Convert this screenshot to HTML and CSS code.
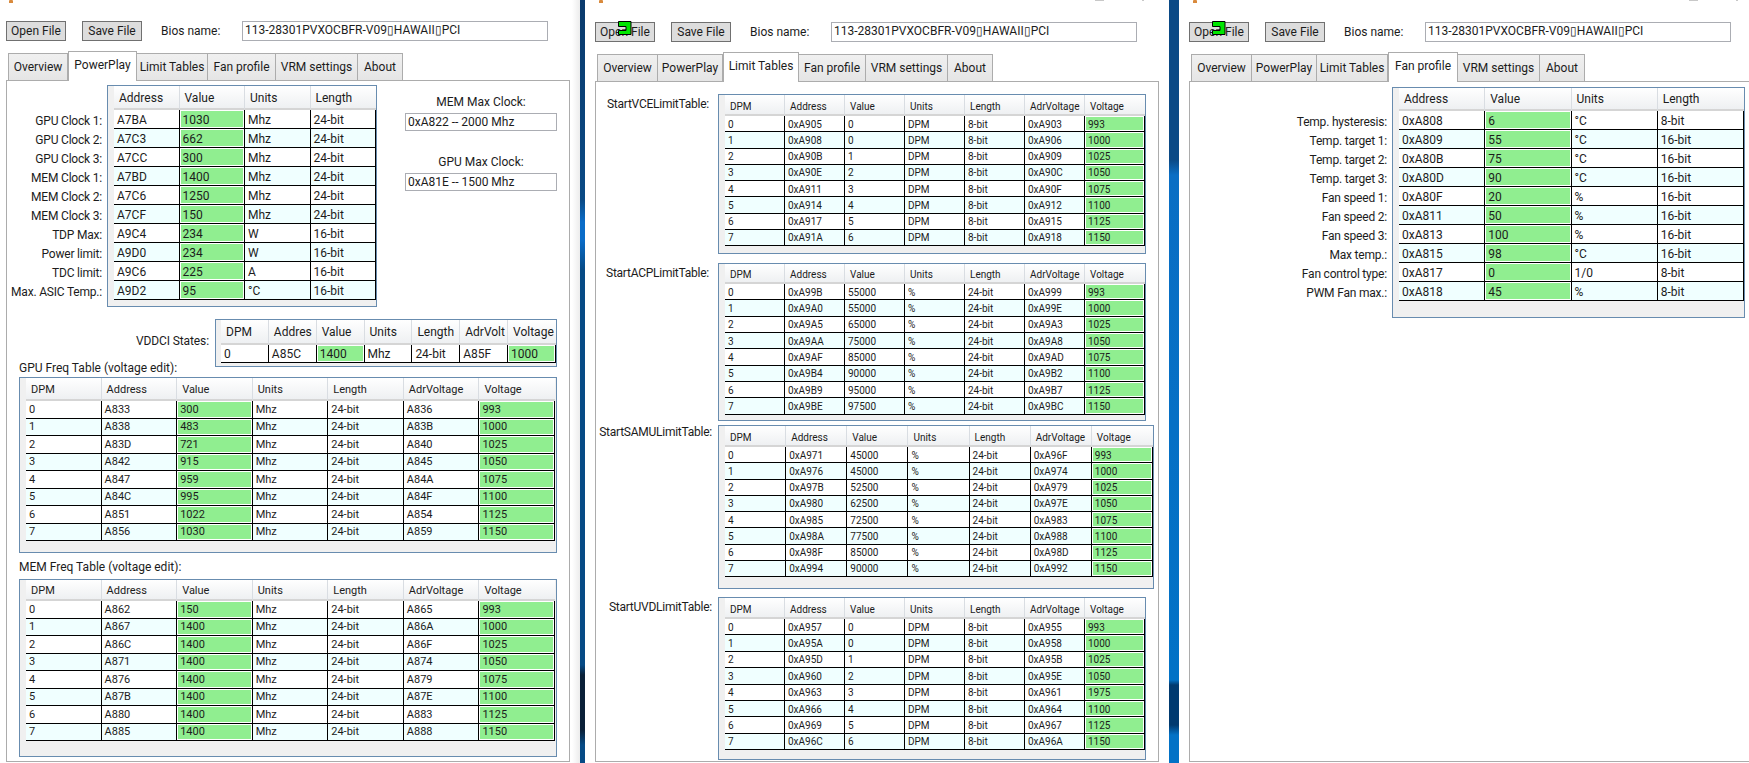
FILE: index.html
```html
<!DOCTYPE html>
<html lang="en">
<head>
<meta charset="utf-8">
<title>Hawaii Bios Reader and Modifier</title>
<link rel="stylesheet" href="styles.css">
</head>
<body>
<div class="desktop">

<section class="win win1">
<div class="title"><i class="ico"></i></div>
<div class="bar"><button class="btn">Open File</button><button class="btn save">Save File</button><span class="bios">Bios name:</span><div class="field name">113-28301PVXOCBFR-V09▯HAWAII▯PCI</div></div>
<div class="tabs"><div class="tab ov">Overview</div><div class="tab pp sel">PowerPlay</div><div class="tab lt">Limit Tables</div><div class="tab fp">Fan profile</div><div class="tab vr">VRM settings</div><div class="tab ab">About</div></div>
<div class="panel p1">
<div class="top">
<div class="labels l1"><div>GPU Clock 1:</div><div>GPU Clock 2:</div><div>GPU Clock 3:</div><div>MEM Clock 1:</div><div>MEM Clock 2:</div><div>MEM Clock 3:</div><div>TDP Max:</div><div>Power limit:</div><div>TDC limit:</div><div>Max. ASIC Temp.:</div></div>
<div class="grid g-main">
<table><thead><tr><th>Address<th>Value<th>Units<th>Length</thead><tbody>
<tr><td>A7BA<td class="v">1030<td>Mhz<td>24-bit
<tr><td>A7C3<td class="v">662<td>Mhz<td>24-bit
<tr><td>A7CC<td class="v">300<td>Mhz<td>24-bit
<tr><td>A7BD<td class="v">1400<td>Mhz<td>24-bit
<tr><td>A7C6<td class="v">1250<td>Mhz<td>24-bit
<tr><td>A7CF<td class="v">150<td>Mhz<td>24-bit
<tr><td>A9C4<td class="v">234<td>W<td>16-bit
<tr><td>A9D0<td class="v">234<td>W<td>16-bit
<tr><td>A9C6<td class="v">225<td>A<td>16-bit
<tr><td>A9D2<td class="v">95<td>°C<td>16-bit
</tbody></table>
</div>
<div class="maxes">
<div class="maxlabel">MEM Max Clock:</div><div class="field maxval">0xA822 -- 2000 Mhz</div>
<div class="maxlabel second">GPU Max Clock:</div><div class="field maxval">0xA81E -- 1500 Mhz</div>
</div>
</div>
<div class="vddci">
<div class="vlabel">VDDCI States:</div>
<div class="grid g-vddci">
<table><thead><tr><th>DPM<th>Addres<th>Value<th>Units<th>Length<th>AdrVolt<th>Voltage</thead><tbody>
<tr><td>0<td>A85C<td class="v">1400<td>Mhz<td>24-bit<td>A85F<td class="v">1000
</tbody></table>
</div>
</div>
<div class="caption cap-gpu">GPU Freq Table (voltage edit):</div>
<div class="grid g-gpu">
<table><thead><tr><th>DPM<th>Address<th>Value<th>Units<th>Length<th>AdrVoltage<th>Voltage</thead><tbody>
<tr><td>0<td>A833<td class="v">300<td>Mhz<td>24-bit<td>A836<td class="v">993
<tr><td>1<td>A838<td class="v">483<td>Mhz<td>24-bit<td>A83B<td class="v">1000
<tr><td>2<td>A83D<td class="v">721<td>Mhz<td>24-bit<td>A840<td class="v">1025
<tr><td>3<td>A842<td class="v">915<td>Mhz<td>24-bit<td>A845<td class="v">1050
<tr><td>4<td>A847<td class="v">959<td>Mhz<td>24-bit<td>A84A<td class="v">1075
<tr><td>5<td>A84C<td class="v">995<td>Mhz<td>24-bit<td>A84F<td class="v">1100
<tr><td>6<td>A851<td class="v">1022<td>Mhz<td>24-bit<td>A854<td class="v">1125
<tr><td>7<td>A856<td class="v">1030<td>Mhz<td>24-bit<td>A859<td class="v">1150
</tbody></table>
</div>
<div class="caption cap-mem">MEM Freq Table (voltage edit):</div>
<div class="grid g-mem">
<table><thead><tr><th>DPM<th>Address<th>Value<th>Units<th>Length<th>AdrVoltage<th>Voltage</thead><tbody>
<tr><td>0<td>A862<td class="v">150<td>Mhz<td>24-bit<td>A865<td class="v">993
<tr><td>1<td>A867<td class="v">1400<td>Mhz<td>24-bit<td>A86A<td class="v">1000
<tr><td>2<td>A86C<td class="v">1400<td>Mhz<td>24-bit<td>A86F<td class="v">1025
<tr><td>3<td>A871<td class="v">1400<td>Mhz<td>24-bit<td>A874<td class="v">1050
<tr><td>4<td>A876<td class="v">1400<td>Mhz<td>24-bit<td>A879<td class="v">1075
<tr><td>5<td>A87B<td class="v">1400<td>Mhz<td>24-bit<td>A87E<td class="v">1100
<tr><td>6<td>A880<td class="v">1400<td>Mhz<td>24-bit<td>A883<td class="v">1125
<tr><td>7<td>A885<td class="v">1400<td>Mhz<td>24-bit<td>A888<td class="v">1150
</tbody></table>
</div>
</div>
</section>

<section class="win win2">
<div class="title"><i class="ico"></i><span class="tt">Hawaii Bios Reader and Modifier</span><i class="ctl c1"></i><i class="ctl c2"></i></div>
<div class="bar"><button class="btn">Open File<svg class="cursor" viewBox="0 0 14 14"><path d="M.5.5H13V13.5H.5V9.5H8V5.5H.5Z"/></svg></button><button class="btn save">Save File</button><span class="bios">Bios name:</span><div class="field name">113-28301PVXOCBFR-V09▯HAWAII▯PCI</div></div>
<div class="tabs"><div class="tab ov">Overview</div><div class="tab pp">PowerPlay</div><div class="tab lt sel">Limit Tables</div><div class="tab fp">Fan profile</div><div class="tab vr">VRM settings</div><div class="tab ab">About</div></div>
<div class="panel p2">
<div class="lrow">
<div class="tname">StartVCELimitTable:</div>
<div class="grid g-lim g-vce">
<table><thead><tr><th>DPM<th>Address<th>Value<th>Units<th>Length<th>AdrVoltage<th>Voltage</thead><tbody>
<tr><td>0<td>0xA905<td>0<td>DPM<td>8-bit<td>0xA903<td class="v">993
<tr><td>1<td>0xA908<td>0<td>DPM<td>8-bit<td>0xA906<td class="v">1000
<tr><td>2<td>0xA90B<td>1<td>DPM<td>8-bit<td>0xA909<td class="v">1025
<tr><td>3<td>0xA90E<td>2<td>DPM<td>8-bit<td>0xA90C<td class="v">1050
<tr><td>4<td>0xA911<td>3<td>DPM<td>8-bit<td>0xA90F<td class="v">1075
<tr><td>5<td>0xA914<td>4<td>DPM<td>8-bit<td>0xA912<td class="v">1100
<tr><td>6<td>0xA917<td>5<td>DPM<td>8-bit<td>0xA915<td class="v">1125
<tr><td>7<td>0xA91A<td>6<td>DPM<td>8-bit<td>0xA918<td class="v">1150
</tbody></table>
</div>
</div>
<div class="lrow acp">
<div class="tname">StartACPLimitTable:</div>
<div class="grid g-lim g-acp">
<table><thead><tr><th>DPM<th>Address<th>Value<th>Units<th>Length<th>AdrVoltage<th>Voltage</thead><tbody>
<tr><td>0<td>0xA99B<td>55000<td>%<td>24-bit<td>0xA999<td class="v">993
<tr><td>1<td>0xA9A0<td>55000<td>%<td>24-bit<td>0xA99E<td class="v">1000
<tr><td>2<td>0xA9A5<td>65000<td>%<td>24-bit<td>0xA9A3<td class="v">1025
<tr><td>3<td>0xA9AA<td>75000<td>%<td>24-bit<td>0xA9A8<td class="v">1050
<tr><td>4<td>0xA9AF<td>85000<td>%<td>24-bit<td>0xA9AD<td class="v">1075
<tr><td>5<td>0xA9B4<td>90000<td>%<td>24-bit<td>0xA9B2<td class="v">1100
<tr><td>6<td>0xA9B9<td>95000<td>%<td>24-bit<td>0xA9B7<td class="v">1125
<tr><td>7<td>0xA9BE<td>97500<td>%<td>24-bit<td>0xA9BC<td class="v">1150
</tbody></table>
</div>
</div>
<div class="lrow samu">
<div class="tname wide">StartSAMULimitTable:</div>
<div class="grid g-lim g-samu">
<table><thead><tr><th>DPM<th>Address<th>Value<th>Units<th>Length<th>AdrVoltage<th>Voltage</thead><tbody>
<tr><td>0<td>0xA971<td>45000<td>%<td>24-bit<td>0xA96F<td class="v">993
<tr><td>1<td>0xA976<td>45000<td>%<td>24-bit<td>0xA974<td class="v">1000
<tr><td>2<td>0xA97B<td>52500<td>%<td>24-bit<td>0xA979<td class="v">1025
<tr><td>3<td>0xA980<td>62500<td>%<td>24-bit<td>0xA97E<td class="v">1050
<tr><td>4<td>0xA985<td>72500<td>%<td>24-bit<td>0xA983<td class="v">1075
<tr><td>5<td>0xA98A<td>77500<td>%<td>24-bit<td>0xA988<td class="v">1100
<tr><td>6<td>0xA98F<td>85000<td>%<td>24-bit<td>0xA98D<td class="v">1125
<tr><td>7<td>0xA994<td>90000<td>%<td>24-bit<td>0xA992<td class="v">1150
</tbody></table>
</div>
</div>
<div class="lrow uvd">
<div class="tname wider">StartUVDLimitTable:</div>
<div class="grid g-lim g-uvd">
<table><thead><tr><th>DPM<th>Address<th>Value<th>Units<th>Length<th>AdrVoltage<th>Voltage</thead><tbody>
<tr><td>0<td>0xA957<td>0<td>DPM<td>8-bit<td>0xA955<td class="v">993
<tr><td>1<td>0xA95A<td>0<td>DPM<td>8-bit<td>0xA958<td class="v">1000
<tr><td>2<td>0xA95D<td>1<td>DPM<td>8-bit<td>0xA95B<td class="v">1025
<tr><td>3<td>0xA960<td>2<td>DPM<td>8-bit<td>0xA95E<td class="v">1050
<tr><td>4<td>0xA963<td>3<td>DPM<td>8-bit<td>0xA961<td class="v">1975
<tr><td>5<td>0xA966<td>4<td>DPM<td>8-bit<td>0xA964<td class="v">1100
<tr><td>6<td>0xA969<td>5<td>DPM<td>8-bit<td>0xA967<td class="v">1125
<tr><td>7<td>0xA96C<td>6<td>DPM<td>8-bit<td>0xA96A<td class="v">1150
</tbody></table>
</div>
</div>
</div>
</section>

<section class="win win3">
<div class="title"><i class="ico"></i><span class="tt">Hawaii Bios Reader and Modifier</span><i class="ctl c1"></i><i class="ctl c2"></i></div>
<div class="bar"><button class="btn">Open File<svg class="cursor" viewBox="0 0 14 14"><path d="M.5.5H13V13.5H.5V9.5H8V5.5H.5Z"/></svg></button><button class="btn save">Save File</button><span class="bios">Bios name:</span><div class="field name">113-28301PVXOCBFR-V09▯HAWAII▯PCI</div></div>
<div class="tabs"><div class="tab ov">Overview</div><div class="tab pp">PowerPlay</div><div class="tab lt">Limit Tables</div><div class="tab fp sel">Fan profile</div><div class="tab vr">VRM settings</div><div class="tab ab">About</div></div>
<div class="panel p3">
<div class="labels l3"><div>Temp. hysteresis:</div><div>Temp. target 1:</div><div>Temp. target 2:</div><div>Temp. target 3:</div><div>Fan speed 1:</div><div>Fan speed 2:</div><div>Fan speed 3:</div><div>Max temp.:</div><div>Fan control type:</div><div>PWM Fan max.:</div></div>
<div class="grid g-fan">
<table><thead><tr><th>Address<th>Value<th>Units<th>Length</thead><tbody>
<tr><td>0xA808<td class="v">6<td>°C<td>8-bit
<tr><td>0xA809<td class="v">55<td>°C<td>16-bit
<tr><td>0xA80B<td class="v">75<td>°C<td>16-bit
<tr><td>0xA80D<td class="v">90<td>°C<td>16-bit
<tr><td>0xA80F<td class="v">20<td>%<td>16-bit
<tr><td>0xA811<td class="v">50<td>%<td>16-bit
<tr><td>0xA813<td class="v">100<td>%<td>16-bit
<tr><td>0xA815<td class="v">98<td>°C<td>16-bit
<tr><td>0xA817<td class="v">0<td>1/0<td>8-bit
<tr><td>0xA818<td class="v">45<td>%<td>8-bit
</tbody></table>
</div>
</div>
</section>

</div>
</body>
</html>
```
FILE: styles.css
```css
* { box-sizing: border-box; }
html, body { margin: 0; padding: 0; background: #fff; }
body { font-family: Roboto, "Noto Sans", sans-serif; font-size: 12px; color: #1c1c1c; }

.desktop {
  position: relative;
  width: 1749px;
  height: 763px;
  overflow: hidden;
  background:
    linear-gradient(#0a3a6c 0, #0a4a85 200px, #0a6cc8 222px, #0a6cc8 240px, #064a85 270px, #064a85 665px, #0a2038 675px, #0a2038 730px, #064a85 745px) 580px 0 / 5px 100% no-repeat,
    linear-gradient(#0b4a86 0, #0b4a86 160px, #0a6ec4 175px, #0272c6 680px, #003a70 685px, #003a70 725px, #0272c6 735px) 1169px 0 / 10px 100% no-repeat,
    #fff;
}

.win { position: absolute; top: 0; height: 763px; background: #fff; display: flex; flex-direction: column; overflow: hidden; padding: 22px 0 1px 10px; }
.win1 { left: 0; width: 580px; padding: 21px 0 1px 6px; background: linear-gradient(90deg, #fff 572px, #ececec 580px); }
.win2 { left: 585px; width: 584px; }
.win3 { left: 1179px; width: 570px; }

.title { position: absolute; top: 0; left: 0; width: 100%; height: 3px; overflow: hidden; display: flex; }
.ico { width: 4px; height: 4px; background: #d98a3c; margin-left: 14px; flex: none; border-radius: 1px; }
.win1 .ico { margin-left: 9px; }
.tt { font-size: 14px; line-height: 3px; height: 3px; margin-left: 12px; color: #aaa; transform: translateY(-6px); }
.ctl { position: absolute; top: 0; height: 1px; background: #c8c8c8; }
.c1 { width: 9px; left: 510px; }
.c2 { width: 2px; left: 557px; }

.bar { display: flex; height: 20px; flex: none; }
.btn { position: relative; width: 60px; height: 20px; padding: 0; font: inherit; color: inherit; background: #ddd; border: 1px solid #707070; }
.save { margin-left: 16px; }
.bios { width: 81px; margin-left: 19px; line-height: 21px; }
.field { border: 1px solid #abadb3; background: #fff; padding-left: 2px; }
.name { width: 306px; height: 20px; line-height: 16px; }
.cursor { position: absolute; left: 22px; top: -2px; width: 14px; height: 14px; }
.cursor path { fill: #00e600; stroke: #000; stroke-width: 1; }

.tabs { display: flex; align-items: flex-end; height: 29px; margin: 10px 0 0 2px; flex: none; }
.tab { height: 27px; line-height: 27px; text-align: center; white-space: nowrap; background: linear-gradient(#f0f0f0, #e5e5e5); border: 1px solid #acacac; border-bottom: 0; border-left-width: 0; flex: none; }
.tab.ov { border-left-width: 1px; }
.ov { width: 61px; }
.pp { width: 65px; }
.lt { width: 71px; }
.fp { width: 67px; }
.vr { width: 82px; }
.ab { width: 45px; }
.tab.sel { position: relative; height: 30px; line-height: 26px; margin-bottom: -1px; background: #fff; border-left-width: 1px; }
.sel.pp { width: 69px; }
.sel.lt { width: 76px; }
.sel.fp { width: 70px; }
.win1 .ov { width: 60px; }
.win1 .fp { width: 68px; }

.panel { flex: 1; width: 564px; border: 1px solid #acacac; background: #fff; }
.p1 { padding: 4px 0 0 12px; }
.p2 { padding: 12px 0 0 0; }
.p3 { padding: 5px 0 0 0; display: flex; }

.top { display: flex; margin-left: -12px; }
.labels { flex: none; text-align: right; letter-spacing: -.2px; }
.labels div { height: 19px; line-height: 22px; white-space: nowrap; }
.l1 { width: 95px; margin-right: 5px; padding-top: 25px; }
.l3 { width: 197px; margin-right: 5px; padding-top: 24px; }
.maxes { margin-left: 28px; width: 152px; }
.maxlabel { height: 16px; line-height: 16px; margin: 9px 0 3px; text-align: center; }
.maxlabel.second { margin-top: 23px; }
.maxval { height: 18px; line-height: 16px; }

.vddci { display: flex; justify-content: flex-end; margin: 12px 12px 0 0; }
.vlabel { margin-right: 6px; line-height: 45px; letter-spacing: -.1px; }
.caption { height: 16px; line-height: 16px; }
.cap-gpu { margin-top: -7px; margin-bottom: 1px; }
.cap-mem { margin-top: 6px; margin-bottom: 4px; }

.grid { background: #f0f0f0; border: 1px solid #688caf; padding-left: 6px; flex: none; }
table { border-collapse: separate; border-spacing: 0; table-layout: fixed; width: 100%; }
th { font-weight: 400; text-align: left; padding: 1px 0 0 5px; background: linear-gradient(#fff, #eef0f2); border-right: 1px solid #d9dde2; border-bottom: 2px solid #d5d5d5; white-space: nowrap; overflow: hidden; }
th:last-child { border-right: 0; }
td { padding: 1px 0 0 3px; background: #fff; border-right: 1px solid #000; border-bottom: 1px solid #000; white-space: nowrap; }
tbody tr:nth-child(even) td { background: #f0ffff; }
tbody tr td.v { background: #90ee90; box-shadow: inset 1px 1px 0 #fff, inset -1px -1px 0 #fff; }

.g-main { width: 270px; height: 222px; }
.g-main thead tr { height: 24px; }
.g-main tbody tr { height: 19px; }
.g-main table { width: 262px; }

.g-vddci { width: 342px; height: 48px; padding-left: 5px; }
.g-vddci thead tr { height: 25px; }
.g-vddci tbody tr { height: 18px; }
.g-vddci table { width: 335px; }

.g-gpu, .g-mem { width: 538px; font-size: 11px; }
.g-gpu table, .g-mem table { width: 529px; }
.g-gpu td, .g-mem td { padding-top: 0; }
.g-gpu th, .g-mem th { padding-top: 2px; }
.g-gpu { height: 176px; }
.g-gpu thead tr { height: 23px; }
.g-mem { height: 178px; }
.g-mem thead tr { height: 21px; }
.g-gpu tbody tr, .g-mem tbody tr { height: 17.5px; }

.lrow { display: flex; }
.acp { margin-top: 9px; }
.samu { margin-top: 4px; }
.uvd { margin-top: 8px; }
.tname { width: 122px; padding-right: 9px; margin-top: 2px; text-align: right; height: 16px; line-height: 16px; white-space: nowrap; flex: none; letter-spacing: -.25px; }
.tname.wide { padding-right: 6px; margin-top: -1px; }
.tname.wider { padding-right: 6px; }
.g-lim { font-size: 10px; width: 428px; }
.g-lim table { width: 420px; }
.g-lim th { padding-top: 3px; }
.g-lim thead tr { height: 21px; }
.g-lim tbody tr { height: 16.25px; }
.g-vce { height: 160px; }
.g-acp { height: 158px; }
.g-acp thead tr { height: 20px; }
.g-acp tbody tr { height: 16.35px; }
.g-samu { width: 436px; height: 164px; }
.g-samu table { width: 428px; }
.g-uvd { height: 163px; }
.g-uvd tbody tr { height: 16.4px; }

.g-fan { width: 353px; height: 231px; }
.g-fan table { width: 345px; }
.g-fan thead tr { height: 23px; }
.g-fan tbody tr { height: 19px; }
```
